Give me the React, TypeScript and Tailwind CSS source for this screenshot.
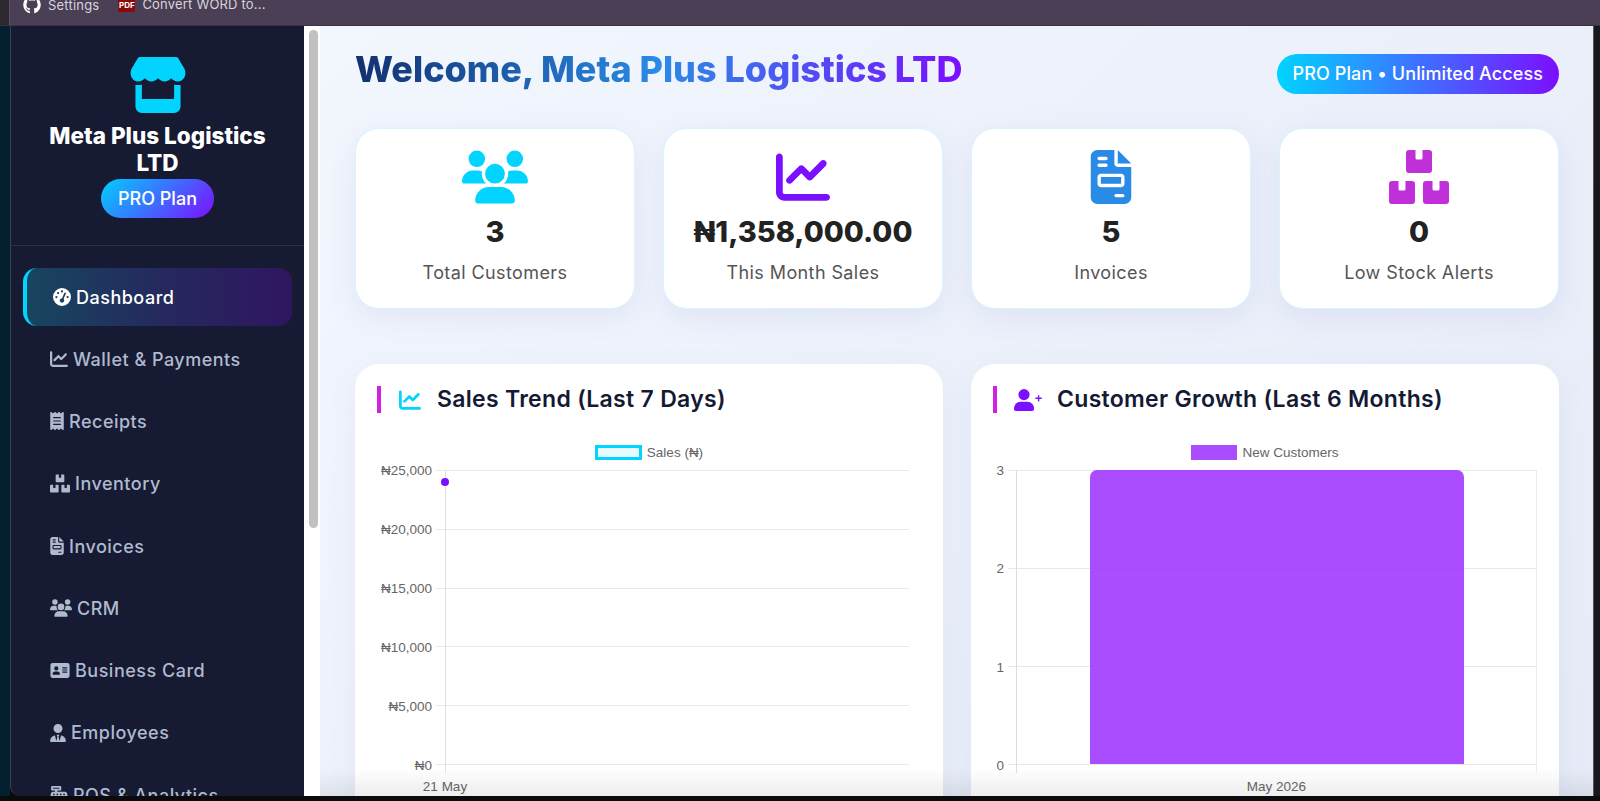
import type { ReactNode } from "react";
import {
  FaAddressCard,
  FaCashRegister,
  FaChartLine,
  FaFileInvoice,
  FaGaugeHigh,
  FaGithub,
  FaReceipt,
  FaStore,
  FaUserTie,
  FaUsers,
} from "react-icons/fa6";

// three separate boxes with a taped notch, the FA boxes glyph of the reference
function BoxesIcon({ width, height, className }: { width: number; height: number; className?: string }) {
  const box =
    "M3 0H9.5V8a1.5 1.5 0 0 0 1.5 1.5h4a1.5 1.5 0 0 0 1.5-1.5V0H23a3 3 0 0 1 3 3V20a3 3 0 0 1-3 3H3a3 3 0 0 1-3-3V3a3 3 0 0 1 3-3Z";
  return (
    <svg viewBox="0 0 60 54" width={width} height={height} fill="currentColor" className={className}>
      <path d={box} transform="translate(17 0)" />
      <path d={box} transform="translate(0 31)" />
      <path d={box} transform="translate(34 31)" />
    </svg>
  );
}

function UserPlusIcon({ className }: { className?: string }) {
  return (
    <svg viewBox="0 0 28 22" width={28} height={22} fill="currentColor" className={className}>
      <circle cx="10" cy="5.6" r="5.6" />
      <path d="M6.5 12.8h7c3.6 0 6.5 3 6.5 6.7v.6a1.9 1.9 0 0 1-1.9 1.9H1.9A1.9 1.9 0 0 1 0 20.100v-.6c0-3.700 2.900-6.700 6.500-6.700Z" />
      <path d="M23.900 6.200h1.400v2.400h2.500v1.400h-2.500v2.400h-1.400v-2.400h-2.500V8.600h2.500Z" />
    </svg>
  );
}

const navItems = [
  { label: "Wallet & Payments", icon: <FaChartLine size={18} /> },
  { label: "Receipts", icon: <FaReceipt className="h-[18px] w-[14px]" /> },
  { label: "Inventory", icon: <BoxesIcon width={20} height={19} /> },
  { label: "Invoices", icon: <FaFileInvoice className="h-[18px] w-[14px]" /> },
  { label: "CRM", icon: <FaUsers size={22} /> },
  { label: "Business Card", icon: <FaAddressCard className="h-[17px] w-[20px]" /> },
  { label: "Employees", icon: <FaUserTie className="h-[18px] w-[16px]" /> },
  { label: "POS & Analytics", icon: <FaCashRegister size={18} /> },
];

const stats = [
  { value: "3", label: "Total Customers", icon: <FaUsers size={66} className="text-[#00d4ff]" /> },
  { value: "₦1,358,000.00", label: "This Month Sales", icon: <FaChartLine size={54} className="text-[#7b0fff]" /> },
  { value: "5", label: "Invoices", icon: <FaFileInvoice size={54} className="text-[#2a8be6]" /> },
  { value: "0", label: "Low Stock Alerts", icon: <BoxesIcon width={60} height={54} className="text-[#c030d8]" /> },
];

const salesTicks = ["₦25,000", "₦20,000", "₦15,000", "₦10,000", "₦5,000", "₦0"];
const customerTicks = ["3", "2", "1", "0"];

function ChartCard({ title, icon, children }: { title: string; icon: ReactNode; children: ReactNode }) {
  return (
    <section className="h-[480px] rounded-[24px] bg-white px-[22px] pt-[22px] shadow-[0_8px_30px_rgba(90,110,190,0.08)]">
      <div className="flex h-[27px] items-center">
        <span className="h-[27px] w-1 bg-[#d020e0]" />
        <span className="ml-[17px] flex">{icon}</span>
        <h2 className="ml-[15px] text-[23px] font-semibold tracking-[0.3px] text-[#141a33]">{title}</h2>
      </div>
      {children}
    </section>
  );
}

function Legend({ label, solid }: { label: string; solid?: boolean }) {
  return (
    <div className="flex h-[15px] items-center justify-center gap-[5px] font-['Liberation_Sans',sans-serif] text-[13.5px] text-[#666]">
      <span
        className={
          solid
            ? "h-[15px] w-[46px] bg-[#a94dff]"
            : "h-[15px] w-[47px] border-[3px] border-[#00d4ff] bg-[#e6fbff]"
        }
      />
      <span className="translate-y-px">{label}</span>
    </div>
  );
}

function SalesChart() {
  return (
    <div className="mt-[32px]">
      <Legend label="Sales (₦)" />
      <div className="mt-[10px] flex font-['Liberation_Sans',sans-serif] text-[13.5px] text-[#666]">
        <div className="flex h-[295px] w-[55px] flex-col justify-between text-right">
          {salesTicks.map((tick) => (
            <span key={tick} className="-my-[7px] h-[14px] translate-y-px leading-[14px]">
              {tick}
            </span>
          ))}
        </div>
        <div className="relative ml-[4px] h-[295px] w-[473px]">
          <div className="flex h-full flex-col justify-between">
            {salesTicks.map((tick) => (
              <span key={tick} className="h-px bg-[#e8e8e8]" />
            ))}
          </div>
          <span className="absolute left-[9px] top-0 h-[303px] w-px bg-[#e0e0e0]" />
          <span className="absolute left-[5px] top-[8px] size-[8px] rounded-full bg-[#7b0fff]" />
          <span className="absolute -left-[16px] top-[307px] w-[50px] text-center">21 May</span>
        </div>
      </div>
    </div>
  );
}

function CustomerChart() {
  return (
    <div className="mt-[32px]">
      <Legend label="New Customers" solid />
      <div className="mt-[10px] flex font-['Liberation_Sans',sans-serif] text-[13.5px] text-[#666]">
        <div className="flex h-[295px] w-[15px] flex-col justify-between text-right">
          {customerTicks.map((tick) => (
            <span key={tick} className="-my-[7px] h-[14px] translate-y-px pr-[4px] leading-[14px]">
              {tick}
            </span>
          ))}
        </div>
        <div className="relative h-[295px] w-[529px]">
          <div className="flex h-full flex-col justify-between">
            {customerTicks.map((tick) => (
              <span key={tick} className="h-px bg-[#e8e8e8]" />
            ))}
          </div>
          <span className="absolute left-[8px] top-0 h-[303px] w-px bg-[#dcdcdc]" />
          <span className="absolute right-0 top-0 h-[303px] w-px bg-[#ececec]" />
          <span className="absolute bottom-[1px] left-[82px] top-0 w-[374px] rounded-t-[7px] bg-[#9a2eff]/85" />
          <span className="absolute left-[8px] right-0 top-[307px] text-center">May 2026</span>
        </div>
      </div>
    </div>
  );
}

export default function App() {
  return (
    <div className="flex h-[801px] w-[1600px] flex-col overflow-hidden bg-[#0b0b0e] font-['Inter',sans-serif]">
      <header className="flex h-[26px] shrink-0 items-start border-b border-[#3a3142] bg-[#4a3f55] text-[13px] leading-[8px] tracking-[0.2px] text-[#d9d5dd]">
        <div className="h-full w-[10px] shrink-0 border-r border-[#5d5563] bg-[#2c282e]" />
        <div className="flex -translate-y-[4px] items-center gap-[7px] pl-[13px]">
          <FaGithub size={18} className="text-white" />
          <span>Settings</span>
        </div>
        <div className="ml-[19px] flex -translate-y-[4px] items-center gap-[7px]">
          <span className="flex h-[16px] w-[17px] items-end justify-center rounded-b-[2px] bg-[#8a0a0a] pb-[3px] text-[8px] font-bold tracking-normal text-white">
            PDF
          </span>
          <span>Convert WORD to...</span>
        </div>
      </header>

      <div className="flex h-[770px] shrink-0">
        <div className="w-[10px] shrink-0 bg-[#04202e]" />
        <aside className="flex w-[294px] shrink-0 flex-col overflow-hidden rounded-bl-[10px] border-l border-[#3c4256] bg-[#161b33]">
          <div className="flex h-[220px] shrink-0 flex-col items-center border-b border-[#2b3047] pt-[31px]">
            <FaStore preserveAspectRatio="none" className="h-[56px] w-[58px] text-[#00d4ff]" />
            <h1 className="mt-[9px] w-[240px] text-center text-[22.5px] font-extrabold leading-[27px] text-white">
              Meta Plus Logistics LTD
            </h1>
            <span className="mt-[3px] rounded-full bg-[linear-gradient(135deg,#00cfff,#7b0fff)] px-[17px] py-[8px] text-[18px] font-medium leading-[23px] text-white">
              PRO Plan
            </span>
          </div>
          <nav className="flex flex-col gap-[4px] px-[12px] pt-[22px]">
            <a className="flex h-[58px] items-center gap-[5px] rounded-[14px] border-l-4 border-[#00d4ff] bg-[linear-gradient(90deg,#17455f,#26275e_55%,#2f1660)] pl-[26px] text-[18px] font-medium tracking-[0.5px] text-white">
              <FaGaugeHigh size={18} />
              Dashboard
            </a>
            {navItems.map((item) => (
              <a
                key={item.label}
                className="flex h-[58.3px] items-center gap-[5px] pl-[27px] text-[18px] font-medium tracking-[0.5px] text-[#b0bace]"
              >
                {item.icon}
                {item.label}
              </a>
            ))}
          </nav>
        </aside>

        <div className="w-[16px] shrink-0 bg-white pl-[5px] pt-[4px]">
          <div className="h-[498px] w-[9px] rounded-full bg-[#c1c1c1]" />
        </div>

        <main className="relative w-[1273px] shrink-0 overflow-hidden bg-[linear-gradient(135deg,#f2f6fd,#e7ebf8)] pl-[35px] pr-[34px] pt-[21px]">
          <div className="flex h-[50px] items-start justify-between">
            <h1 className="bg-[linear-gradient(90deg,#12306f,#2a8be6_50%,#7b0fff)] bg-clip-text pb-[4px] text-[36px] font-extrabold leading-[44px] text-transparent">
              Welcome, Meta Plus Logistics LTD
            </h1>
            <span className="mt-[7px] rounded-full bg-[linear-gradient(90deg,#00d4ff,#7b0fff)] px-[16px] text-[18px] font-medium leading-[40px] tracking-[0.1px] text-white">
              PRO Plan • Unlimited Access
            </span>
          </div>

          <div className="mt-[31px] grid grid-cols-4 gap-[28px]">
            {stats.map((stat) => (
              <div
                key={stat.label}
                className="flex h-[181px] flex-col items-center rounded-[24px] border border-[#d8f4ff] bg-white pt-[21px] shadow-[0_8px_30px_rgba(90,110,190,0.1)]"
              >
                <div className="flex h-[54px] items-center justify-center">{stat.icon}</div>
                <div className="mt-[6px] text-[29px] font-extrabold leading-[44px] text-[#222]">{stat.value}</div>
                <div className="mt-[7px] text-[18px] leading-[24px] tracking-[0.4px] text-[#555]">{stat.label}</div>
              </div>
            ))}
          </div>

          <div className="mt-[55px] grid grid-cols-2 gap-[28px]">
            <ChartCard title="Sales Trend (Last 7 Days)" icon={<FaChartLine size={22} className="ml-px mr-px text-[#00d4ff]" />}>
              <SalesChart />
            </ChartCard>
            <ChartCard title="Customer Growth (Last 6 Months)" icon={<UserPlusIcon className="text-[#7b0fff]" />}>
              <CustomerChart />
            </ChartCard>
          </div>

          {/* soft grey fade where the window ends */}
          <div className="pointer-events-none absolute inset-x-0 bottom-0 h-[28px] bg-[linear-gradient(180deg,rgba(0,0,0,0),rgba(0,0,0,0.07))]" />
        </main>

        <div className="flex-1 border-l border-[#55555c] bg-[#17171c]" />
      </div>
    </div>
  );
}
